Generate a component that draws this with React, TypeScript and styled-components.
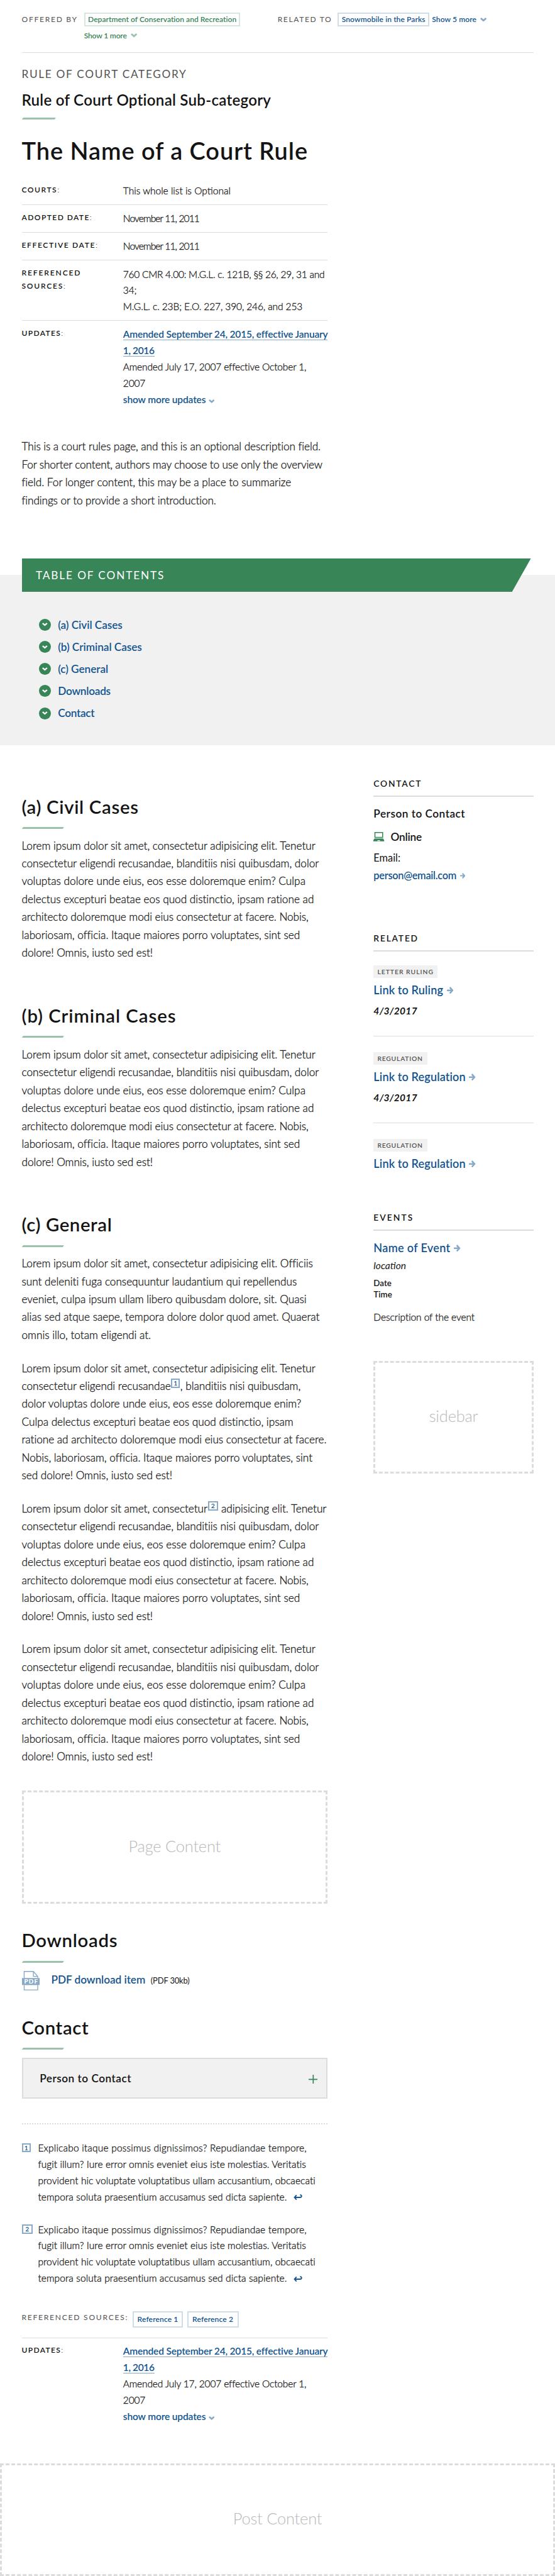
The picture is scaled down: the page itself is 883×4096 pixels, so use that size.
import React from "react";
import styled, { createGlobalStyle, css } from "styled-components";

const ink = "#141414";
const muted = "#535353";
const green = "#388557";
const greenSoft = "#9bc2ab";
const blue = "#14558f";
const blueSoft = "#89aac7";
const rule = "#dcdcdc";
const panel = "#f1f1f1";

const GlobalStyle = createGlobalStyle`
  html { font-size: 8.6268px; }
  body {
    margin: 0;
    background: #fff;
    color: ${ink};
    font-family: Lato, "Open Sans", sans-serif;
    font-weight: 300;
  }
  *, *::before, *::after { box-sizing: border-box; }
  h1, h2, h3, h4, p, ul, ol, dl, dd, dt { margin: 0; padding: 0; font-weight: inherit; }
  ul, ol { list-style: none; }
  a { color: inherit; text-decoration: none; }
`;

/* ---------- shared text ---------- */

const Page = styled.div`
  overflow: hidden;
`;

const thickened = css`
  -webkit-text-stroke: 0.3px currentColor;
  a,
  sup {
    -webkit-text-stroke: 0;
  }
`;

const Track = styled.span<{ $ls: number }>`
  letter-spacing: ${(p) => p.$ls}em;
`;

type Run = [React.ReactNode, number];

const Lines = ({ runs }: { runs: Run[] }) => (
  <>
    {runs.map(([text, ls], i) => (
      <React.Fragment key={i}>
        {i > 0 && <br />}
        <Track $ls={ls}>{text}</Track>
      </React.Fragment>
    ))}
  </>
);

const chevronPath = "M0 2.2 2.2 0 6 3.2 9.8 0 12 2.2 6 7.6Z";

const Chevron = styled.svg.attrs({ viewBox: "0 0 12 8", children: <path d={chevronPath} /> })<{
  $w?: number;
  $gap?: number;
}>`
  width: ${(p) => p.$w ?? 1.2}rem;
  height: ${(p) => ((p.$w ?? 1.2) * 2) / 3}rem;
  margin-left: ${(p) => p.$gap ?? 0.7}rem;
  fill: currentColor;
  opacity: 0.5;
`;

const Arrow = styled.svg.attrs({
  viewBox: "0 0 12 13",
  children: <path d="M0 5.1h6.8L4.2 2.2 6.2 0 12 6.5 6.2 13l-2-2.2 2.6-2.9H0Z" />,
})<{ $w?: number }>`
  width: ${(p) => p.$w ?? 1.25}rem;
  height: ${(p) => (p.$w ?? 1.25) * 1.06}rem;
  margin-left: 0.65rem;
  fill: ${blueSoft};
  flex: none;
`;

/* ---------- relationship bar ---------- */

const Relations = styled.header`
  display: grid;
  grid-template-columns: 47.2rem 1fr;
  margin: 0 4rem;
  padding: 2.35rem 0 1.8rem;
  border-bottom: 1px solid ${rule};
`;

const Relation = styled.div<{ $label: number }>`
  display: grid;
  grid-template-columns: ${(p) => p.$label}rem 1fr;
  font-size: 1.4rem;
  line-height: 2.5rem;
  white-space: nowrap;
`;

const RelationLabel = styled.span`
  color: ${muted};
  font-weight: 400;
`;

const RelationItems = styled.div<{ $tone: string }>`
  display: flex;
  flex-wrap: wrap;
  align-content: flex-start;
  gap: 0.45rem 0.5rem;
  color: ${(p) => p.$tone};
  font-weight: 600;
`;

const Boxed = styled.a<{ $line: string }>`
  height: 2.5rem;
  padding: 0 0.5rem;
  border: 2px solid ${(p) => p.$line};
  line-height: 2.1rem;
`;

const Toggle = styled.a`
  display: flex;
  align-items: center;
`;

/* ---------- page intro ---------- */

const Intro = styled.section`
  width: 56.4rem;
  margin-left: 4rem;
  white-space: nowrap;
`;

const Category = styled.p`
  margin-top: 2.45rem;
  color: ${muted};
  font-size: 2rem;
  font-weight: 400;
  line-height: 3rem;
`;

const SubCategory = styled.h3`
  margin-top: 1.4rem;
  font-size: 2.8rem;
  font-weight: 600;
  line-height: 3.6rem;
`;

const Bar = styled.div<{ $w?: number; $top?: number }>`
  width: ${(p) => p.$w ?? 7.5}rem;
  height: 0.3rem;
  margin: ${(p) => p.$top ?? 1.57}rem 0 0 0.2rem;
  background: ${greenSoft};
  transform: skewX(-35deg);
`;

const Title = styled.h1`
  margin-top: 3.15rem;
  font-size: 4.4rem;
  font-weight: 600;
  line-height: 5.4rem;
`;

const Facts = styled.dl<{ $top?: number }>`
  margin-top: ${(p) => p.$top ?? 2.2}rem;
  white-space: nowrap;
`;

const Fact = styled.div<{ $line?: boolean }>`
  display: grid;
  grid-template-columns: 18.7rem 1fr;
  padding: 1.05rem 0 0.95rem;
  ${(p) =>
    p.$line &&
    css`
      border-top: 1px solid ${rule};
    `}
  &:last-child {
    padding-bottom: 0;
  }
`;

const FactLabel = styled.dt`
  padding-top: 0.05rem;
  font-size: 1.4rem;
  font-weight: 600;
  line-height: 2.4rem;
`;

const Colon = styled.span`
  font-weight: 300;
`;

const FactValue = styled.dd`
  font-size: 1.8rem;
  line-height: 3rem;
  ${thickened}
`;

const Underlined = styled.a`
  border-bottom: 1px solid ${blueSoft};
  color: ${blue};
  font-weight: 600;
`;

const MoreLink = styled.a`
  color: ${blue};
  font-weight: 600;
`;

const Paragraph = styled.p<{ $top: number }>`
  margin-top: ${(p) => p.$top}rem;
  font-size: 2rem;
  line-height: 3.3rem;
  white-space: nowrap;
  ${thickened}
`;

/* ---------- table of contents ---------- */

const Contents = styled.nav`
  display: flow-root;
  margin-top: 12.02rem;
  padding: 0 4rem 3.9rem;
  background: ${panel};
`;

const ContentsTitle = styled.h2`
  width: 93.9rem;
  height: 6.2rem;
  margin-top: -3rem;
  padding-left: 2.6rem;
  background: ${green};
  clip-path: polygon(0 0, 100% 0, 96.3% 100%, 0 100%);
  color: #fff;
  font-size: 2rem;
  font-weight: 400;
  letter-spacing: 0.108em;
  line-height: 6.2rem;
`;

const ContentsList = styled.ul`
  margin: 4rem 0 0 3.2rem;
  color: ${blue};
  font-size: 2rem;
  font-weight: 600;
  line-height: 4.075rem;
`;

const ContentsItem = styled.li`
  display: flex;
  align-items: center;
  gap: 1.3rem;
`;

const Disc = styled.span`
  display: grid;
  place-items: center;
  width: 2.2rem;
  height: 2.2rem;
  border-radius: 50%;
  background: ${green};
  svg {
    width: 1rem;
    height: 0.7rem;
    fill: #fff;
  }
`;

/* ---------- main columns ---------- */

const Columns = styled.div`
  display: grid;
  grid-template-columns: 56.4rem 29.5rem;
  column-gap: 8.5rem;
  padding-left: 4rem;
`;

const Main = styled.main`
  padding-top: 9.07rem;
`;

const Heading = styled.h2<{ $top?: number }>`
  margin-top: ${(p) => p.$top ?? 0}rem;
  font-size: 3.4rem;
  font-weight: 600;
  line-height: 4.4rem;
`;

const Note = styled.sup<{ $w?: number; $h?: number }>`
  display: inline-block;
  width: ${(p) => p.$w ?? 1.65}rem;
  height: ${(p) => p.$h ?? 1.75}rem;
  border: 2px solid ${blueSoft};
  color: ${blue};
  font-size: 1.2rem;
  font-weight: 600;
  letter-spacing: 0;
  line-height: 1.3rem;
  text-align: center;
`;

const InlineNote = styled(Note)`
  margin: -1rem 0.05rem 0;
  vertical-align: 0.85rem;
`;

const Placeholder = styled.div<{ $top: number }>`
  display: flex;
  align-items: center;
  justify-content: center;
  height: 20.8rem;
  margin-top: ${(p) => p.$top}rem;
  padding-bottom: 0.5rem;
  border: 0.4rem dashed ${rule};
  color: #bababa;
  font-size: 2.95rem;
  letter-spacing: -0.008em;
`;

const Download = styled.div`
  display: flex;
  align-items: center;
  height: 3.6rem;
  margin-top: 1.6rem;
  white-space: nowrap;
`;

const DownloadLink = styled.a`
  margin: 0 1rem 0 2.15rem;
  padding-bottom: 0.55rem;
  color: ${blue};
  font-size: 2rem;
  font-weight: 600;
  letter-spacing: -0.004em;
`;

const FileSize = styled.span`
  padding-bottom: 0.2rem;
  font-size: 1.5rem;
  font-weight: 400;
  letter-spacing: -0.012em;
`;

const PdfIcon = styled.svg`
  width: 3.3rem;
  height: 3.6rem;
`;

const Accordion = styled.div`
  display: flex;
  align-items: center;
  justify-content: space-between;
  height: 7.5rem;
  margin-top: 1.5rem;
  padding: 0 1.6rem 0 3.1rem;
  border: 2px solid ${rule};
  background: ${panel};
  font-size: 2rem;
  font-weight: 600;
  letter-spacing: 0.028em;
  svg {
    width: 1.7rem;
    height: 1.7rem;
    margin-top: 0.4rem;
    stroke: ${green};
    stroke-width: 2;
  }
`;

const Notes = styled.ol`
  margin-top: 4.5rem;
  padding-top: 2.95rem;
  border-top: 2px dotted ${rule};
`;

const NoteItem = styled.li`
  display: grid;
  grid-template-columns: 3rem 1fr;
  margin-bottom: 3.03rem;
  font-size: 1.8rem;
  line-height: 3rem;
  white-space: nowrap;
  ${thickened}
  ${Note} {
    margin-top: 0.55rem;
    -webkit-text-stroke: 0;
  }
`;

const ReturnIcon = styled.svg`
  width: 1.6rem;
  height: 1.1rem;
  margin-left: 1.2rem;
  fill: none;
  stroke: ${blue};
  stroke-width: 2.2;
`;

const Sources = styled.div`
  display: flex;
  margin-top: 4.5rem;
  padding-bottom: 1.85rem;
  border-bottom: 1px solid ${rule};
  font-size: 1.4rem;
  line-height: 2.4rem;
  white-space: nowrap;
`;

const SourcesLabel = styled.span`
  width: 20.5rem;
  color: ${muted};
  font-weight: 400;
`;

const Source = styled.a<{ $w: number }>`
  width: ${(p) => p.$w}rem;
  height: 3rem;
  margin-right: 0.8rem;
  border: 2px solid #d0dde9;
  color: ${blue};
  font-weight: 600;
  line-height: 2.6rem;
  text-align: center;
`;

/* ---------- sidebar ---------- */

const Sidebar = styled.aside`
  padding-top: 5.88rem;
  white-space: nowrap;
`;

const SideTitle = styled.h2<{ $top?: number }>`
  margin-top: ${(p) => p.$top ?? 0}rem;
  padding-bottom: 1rem;
  border-bottom: 2px solid ${rule};
  font-size: 1.6rem;
  font-weight: 600;
  line-height: 2.4rem;
`;

const PersonName = styled.h3`
  margin-top: 1.63rem;
  font-size: 2rem;
  font-weight: 600;
  letter-spacing: 0.028em;
  line-height: 3rem;
`;

const Channel = styled.h4`
  display: flex;
  align-items: center;
  gap: 1.15rem;
  margin-top: 1.2rem;
  font-size: 2rem;
  font-weight: 600;
  letter-spacing: -0.012em;
  line-height: 3rem;
  svg {
    width: 2rem;
    height: 1.7rem;
  }
`;

const EmailBlock = styled.p`
  margin-top: 0.75rem;
  font-size: 1.9rem;
  font-weight: 400;
  line-height: 3.3rem;
`;

const EmailLink = styled.a`
  display: flex;
  align-items: center;
  color: ${blue};
  font-weight: 600;
`;

const RelatedItem = styled.li`
  height: 16rem;
  padding-top: 2.5rem;
  & + & {
    padding-top: 0;
  }
  &:first-child {
    height: 18.5rem;
  }
  &:last-child {
    height: 6.16rem;
  }
`;

const Tag = styled.div<{ $w: number }>`
  width: ${(p) => p.$w}rem;
  height: 2.4rem;
  padding-left: 0.7rem;
  background: ${panel};
  color: ${muted};
  font-size: 1.2rem;
  font-weight: 600;
  line-height: 2.4rem;
`;

const SideLink = styled.a<{ $top: number }>`
  display: flex;
  align-items: center;
  margin-top: ${(p) => p.$top}rem;
  color: ${blue};
  font-size: 2.1rem;
  font-weight: 600;
  line-height: 3rem;
`;

const ItemDate = styled.p`
  margin-top: 0.88rem;
  padding-bottom: 2.95rem;
  border-bottom: 1px solid ${rule};
  font-size: 1.8rem;
  font-style: italic;
  font-weight: 700;
  letter-spacing: 0.018em;
  line-height: 3rem;
`;

const Location = styled.p`
  margin-top: 0.26rem;
  font-size: 1.8rem;
  font-style: italic;
  font-weight: 400;
  line-height: 3rem;
`;

const When = styled.p`
  margin-top: 0.57rem;
  font-size: 1.55rem;
  font-weight: 600;
  line-height: 2.1rem;
`;

const EventText = styled.p`
  margin-top: 1.73rem;
  font-size: 1.8rem;
  letter-spacing: -0.005em;
  line-height: 3rem;
  ${thickened}
`;

/* ---------- content ---------- */

const loremTail: Run[] = [
  ["consectetur eligendi recusandae, blanditiis nisi quibusdam, dolor", -0.001],
  ["voluptas dolore unde eius, eos esse doloremque enim? Culpa", 0],
  ["delectus excepturi beatae eos quod distinctio, ipsam ratione ad", -0.001],
  ["architecto doloremque modi eius consectetur at facere. Nobis,", -0.004],
  ["laboriosam, officia. Itaque maiores porro voluptates, sint sed", -0.001],
  ["dolore! Omnis, iusto sed est!", -0.004],
];
const lorem: Run[] = [
  ["Lorem ipsum dolor sit amet, consectetur adipisicing elit. Tenetur", -0.003],
  ...loremTail,
];

const footnote: Run[] = [
  ["Explicabo itaque possimus dignissimos? Repudiandae tempore,", 0.012],
  ["fugit illum? Iure error omnis eveniet eius iste molestias. Veritatis", 0.004],
  ["provident hic voluptate voluptatibus ullam accusantium, obcaecati", 0.004],
];

const contents: Run[] = [
  ["(a) Civil Cases", -0.004],
  ["(b) Criminal Cases", -0.004],
  ["(c) General", -0.004],
  ["Downloads", -0.016],
  ["Contact", -0.018],
];

const related: { tag: string; w: number; ls: number; link: string; date?: string }[] = [
  { tag: "LETTER RULING", w: 11.8, ls: 0.096, link: "Link to Ruling", date: "4/3/2017" },
  { tag: "REGULATION", w: 9.9, ls: 0.075, link: "Link to Regulation", date: "4/3/2017" },
  { tag: "REGULATION", w: 9.9, ls: 0.075, link: "Link to Regulation" },
];

const Updates = ({ line }: { line?: boolean }) => (
  <Fact $line={line}>
    <FactLabel>
      <Track $ls={0.11}>
        UPDATES<Colon>:</Colon>
      </Track>
    </FactLabel>
    <FactValue>
      <Lines
        runs={[
          [<Underlined>Amended September 24, 2015, effective January</Underlined>, -0.012],
          [<Underlined>1, 2016</Underlined>, -0.025],
          ["Amended July 17, 2007 effective October 1,", -0.01],
          ["2007", -0.01],
        ]}
      />
      <br />
      <MoreLink>
        <Track $ls={-0.009}>show more updates</Track>
        <Chevron $w={1.1} $gap={0.5} />
      </MoreLink>
    </FactValue>
  </Fact>
);

const Footnote = ({ n, w }: { n: number; w: number }) => (
  <NoteItem>
    <Note as="span" $w={w} $h={1.7}>
      {n}
    </Note>
    <span>
      <Lines runs={footnote} />
      <br />
      <Track $ls={0.006}>tempora soluta praesentium accusamus sed dicta sapiente.</Track>
      <ReturnIcon viewBox="0 0 16 11">
        <path d="M5.5 1.6 1.8 5.8l3.7 4.1M2 5.8h9.8c4 0 4-4.7.3-4.7" />
      </ReturnIcon>
    </span>
  </NoteItem>
);

export default function App() {
  return (
    <Page>
      <GlobalStyle />
      <Relations>
        <Relation $label={11.5}>
          <RelationLabel>
            <Track $ls={0.143}>OFFERED BY</Track>
          </RelationLabel>
          <RelationItems $tone={green}>
            <Boxed $line="#d7e7dd">
              <Track $ls={0.002}>Department of Conservation and Recreation</Track>
            </Boxed>
            <Toggle>
              <Track $ls={-0.015}>Show 1 more</Track>
              <Chevron />
            </Toggle>
          </RelationItems>
        </Relation>
        <Relation $label={11.1}>
          <RelationLabel>
            <Track $ls={0.134}>RELATED TO</Track>
          </RelationLabel>
          <RelationItems $tone={blue}>
            <Boxed $line="#d0dde9">
              <Track $ls={0.006}>Snowmobile in the Parks</Track>
            </Boxed>
            <Toggle>
              <Track $ls={0.006}>Show 5 more</Track>
              <Chevron />
            </Toggle>
          </RelationItems>
        </Relation>
      </Relations>

      <Intro>
        <Category>
          <Track $ls={0.098}>RULE OF COURT CATEGORY</Track>
        </Category>
        <SubCategory>
          <Track $ls={0.01}>Rule of Court Optional Sub-category</Track>
        </SubCategory>
        <Bar $w={6} $top={1.5} />
        <Title>
          <Track $ls={0.025}>The Name of a Court Rule</Track>
        </Title>
        <Facts>
          <Fact>
            <FactLabel>
              <Track $ls={0.125}>
                COURTS<Colon>:</Colon>
              </Track>
            </FactLabel>
            <FactValue>This whole list is Optional</FactValue>
          </Fact>
          <Fact $line>
            <FactLabel>
              <Track $ls={0.117}>
                ADOPTED DATE<Colon>:</Colon>
              </Track>
            </FactLabel>
            <FactValue>
              <Track $ls={-0.055}>November 11, 2011</Track>
            </FactValue>
          </Fact>
          <Fact $line>
            <FactLabel>
              <Track $ls={0.135}>
                EFFECTIVE DATE<Colon>:</Colon>
              </Track>
            </FactLabel>
            <FactValue>
              <Track $ls={-0.055}>November 11, 2011</Track>
            </FactValue>
          </Fact>
          <Fact $line>
            <FactLabel>
              <Track $ls={0.153}>REFERENCED</Track>
              <br />
              <Track $ls={0.145}>
                SOURCES<Colon>:</Colon>
              </Track>
            </FactLabel>
            <FactValue>
              <Lines
                runs={[
                  ["760 CMR 4.00: M.G.L. c. 121B, §§ 26, 29, 31 and", -0.017],
                  ["34;", -0.01],
                  ["M.G.L. c. 23B; E.O. 227, 390, 246, and 253", -0.008],
                ]}
              />
            </FactValue>
          </Fact>
          <Updates line />
        </Facts>
        <Paragraph $top={5.5}>
          <Lines
            runs={[
              ["This is a court rules page, and this is an optional description field.", -0.005],
              ["For shorter content, authors may choose to use only the overview", -0.01],
              ["field. For longer content, this may be a place to summarize", -0.003],
              ["findings or to provide a short introduction.", -0.006],
            ]}
          />
        </Paragraph>
      </Intro>

      <Contents>
        <ContentsTitle>TABLE OF CONTENTS</ContentsTitle>
        <ContentsList>
          {contents.map(([text, ls], i) => (
            <ContentsItem key={i}>
              <Disc>
                <svg viewBox="0 0 12 8">
                  <path d={chevronPath} />
                </svg>
              </Disc>
              <Track $ls={ls}>{text}</Track>
            </ContentsItem>
          ))}
        </ContentsList>
      </Contents>

      <Columns>
        <Main>
          <Heading>
            <Track $ls={0.023}>(a) Civil Cases</Track>
          </Heading>
          <Bar />
          <Paragraph $top={1.5}>
            <Lines runs={lorem} />
          </Paragraph>

          <Heading $top={7.65}>
            <Track $ls={0.032}>(b) Criminal Cases</Track>
          </Heading>
          <Bar />
          <Paragraph $top={1.5}>
            <Lines runs={lorem} />
          </Paragraph>

          <Heading $top={7.7}>
            <Track $ls={0.021}>(c) General</Track>
          </Heading>
          <Bar />
          <Paragraph $top={1.45}>
            <Lines
              runs={[
                ["Lorem ipsum dolor sit amet, consectetur adipisicing elit. Officiis", -0.003],
                ["sunt deleniti fuga consequuntur laudantium qui repellendus", -0.002],
                ["eveniet, culpa ipsum ullam libero quibusdam dolore, sit. Quasi", -0.002],
                ["alias sed atque saepe, tempora dolore dolor quod amet. Quaerat", -0.002],
                ["omnis illo, totam eligendi at.", -0.002],
              ]}
            />
          </Paragraph>
          <Paragraph $top={2.8}>
            <Lines
              runs={[
                lorem[0],
                [
                  <>
                    consectetur eligendi recusandae<InlineNote>1</InlineNote>, blanditiis nisi quibusdam,
                  </>,
                  -0.002,
                ],
                ["dolor voluptas dolore unde eius, eos esse doloremque enim?", -0.002],
                ["Culpa delectus excepturi beatae eos quod distinctio, ipsam", -0.002],
                ["ratione ad architecto doloremque modi eius consectetur at facere.", -0.003],
                ["Nobis, laboriosam, officia. Itaque maiores porro voluptates, sint", -0.002],
                ["sed dolore! Omnis, iusto sed est!", -0.003],
              ]}
            />
          </Paragraph>
          <Paragraph $top={2.8}>
            <Lines
              runs={[
                [
                  <>
                    Lorem ipsum dolor sit amet, consectetur
                    <InlineNote $w={1.9}>2</InlineNote> adipisicing elit. Tenetur
                  </>,
                  -0.003,
                ],
                ...loremTail,
              ]}
            />
          </Paragraph>
          <Paragraph $top={2.8}>
            <Lines runs={lorem} />
          </Paragraph>

          <Placeholder $top={4.6}>Page Content</Placeholder>

          <Heading $top={4.6}>
            <Track $ls={0.024}>Downloads</Track>
          </Heading>
          <Bar />
          <Download>
            <PdfIcon viewBox="0 0 33 36" fill="none" stroke={blueSoft} strokeWidth="1.6">
              <path d="M4 13V.8h17L29 10v3M4 26v9h25v-9M21 .8V10h8" />
              <rect x="0" y="13" width="33" height="13" fill={blueSoft} stroke="none" />
              <text
                x="16.5"
                y="23.6"
                fill="#fff"
                stroke="none"
                fontFamily="Lato, sans-serif"
                fontWeight="900"
                fontSize="11.5"
                textAnchor="middle"
                textLength="25"
              >
                PDF
              </text>
            </PdfIcon>
            <DownloadLink>PDF download item</DownloadLink>
            <FileSize>(PDF 30kb)</FileSize>
          </Download>

          <Heading $top={4.6}>
            <Track $ls={0.022}>Contact</Track>
          </Heading>
          <Bar />
          <Accordion>
            Person to Contact
            <svg viewBox="0 0 17 17">
              <path d="M8.5 0v17M0 8.5h17" />
            </svg>
          </Accordion>

          <Notes>
            <Footnote n={1} w={1.7} />
            <Footnote n={2} w={2} />
          </Notes>
          <Sources>
            <SourcesLabel>
              <Track $ls={0.145}>REFERENCED SOURCES:</Track>
            </SourcesLabel>
            <Source $w={9.2}>
              <Track $ls={0.01}>Reference 1</Track>
            </Source>
            <Source $w={9.5}>
              <Track $ls={0.01}>Reference 2</Track>
            </Source>
          </Sources>
          <Facts $top={-0.05}>
            <Updates />
          </Facts>
        </Main>

        <Sidebar>
          <SideTitle>
            <Track $ls={0.127}>CONTACT</Track>
          </SideTitle>
          <PersonName>Person to Contact</PersonName>
          <Channel>
            <svg viewBox="0 0 20 17" fill={green}>
              <path
                fillRule="evenodd"
                d="M2 0h16v10.8H2ZM3.8 1.8v7.3h12.4V1.8ZM2 12h16l2 3.2V17H0v-1.8ZM8 15l-.7 1.4h5.4L12 15Z"
              />
            </svg>
            Online
          </Channel>
          <EmailBlock>
            Email:
            <EmailLink>
              <Track $ls={-0.018}>person@email.com</Track>
              <Arrow $w={1} />
            </EmailLink>
          </EmailBlock>

          <SideTitle $top={8.67}>
            <Track $ls={0.13}>RELATED</Track>
          </SideTitle>
          <ul>
            {related.map((item, i) => (
              <RelatedItem key={i}>
                <Tag $w={item.w}>
                  <Track $ls={item.ls}>{item.tag}</Track>
                </Tag>
                <SideLink $top={0.76}>
                  <Track $ls={0.006}>{item.link}</Track>
                  <Arrow />
                </SideLink>
                {item.date && <ItemDate>{item.date}</ItemDate>}
              </RelatedItem>
            ))}
          </ul>

          <SideTitle $top={7.22}>
            <Track $ls={0.147}>EVENTS</Track>
          </SideTitle>
          <SideLink $top={1.66}>
            <Track $ls={0.017}>Name of Event</Track>
            <Arrow />
          </SideLink>
          <Location>location</Location>
          <When>
            Date
            <br />
            Time
          </When>
          <EventText>Description of the event</EventText>
          <Placeholder $top={6.5}>sidebar</Placeholder>
        </Sidebar>
      </Columns>

      <Placeholder $top={7.05}>Post Content</Placeholder>
    </Page>
  );
}
